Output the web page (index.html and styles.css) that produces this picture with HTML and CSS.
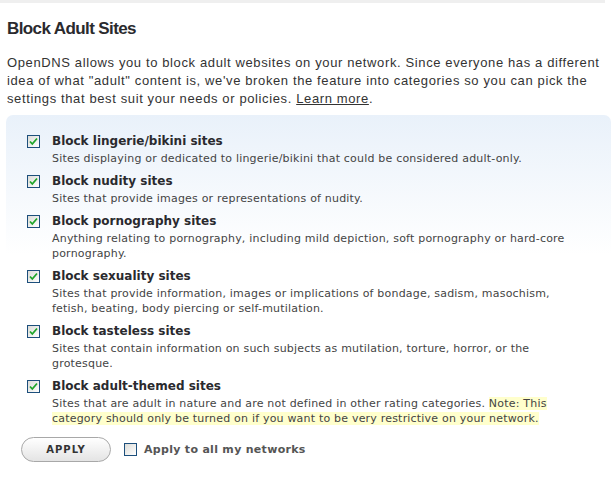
FILE: index.html
```html
<!DOCTYPE html>
<html>
<head>
<meta charset="utf-8">
<link rel="stylesheet" href="styles.css">
</head>
<body>
<div class="topbar"></div>
<div class="page">
  <h1 class="title">Block Adult Sites</h1>
  <p class="intro">OpenDNS allows you to block adult websites on your network. Since everyone has a different idea of what "adult" content is, we've broken the feature into categories so you can pick the settings that best suit your needs or policies. <a class="link" href="#">Learn more</a>.</p>
  <div class="panel">
    <div class="item">
      <span class="cb checked"><svg viewBox="0 0 13 13" width="13" height="13"><path d="M3 6.5 L5.3 9 L10 3.5" fill="none" stroke="#1fa52a" stroke-width="1.8"/></svg></span>
      <div class="body">
        <div class="name">Block lingerie/bikini sites</div>
        <div class="desc">Sites displaying or dedicated to lingerie/bikini that could be considered adult-only.</div>
      </div>
    </div>
    <div class="item">
      <span class="cb checked"><svg viewBox="0 0 13 13" width="13" height="13"><path d="M3 6.5 L5.3 9 L10 3.5" fill="none" stroke="#1fa52a" stroke-width="1.8"/></svg></span>
      <div class="body">
        <div class="name">Block nudity sites</div>
        <div class="desc">Sites that provide images or representations of nudity.</div>
      </div>
    </div>
    <div class="item">
      <span class="cb checked"><svg viewBox="0 0 13 13" width="13" height="13"><path d="M3 6.5 L5.3 9 L10 3.5" fill="none" stroke="#1fa52a" stroke-width="1.8"/></svg></span>
      <div class="body">
        <div class="name">Block pornography sites</div>
        <div class="desc">Anything relating to pornography, including mild depiction, soft pornography or hard&#8209;core pornography.</div>
      </div>
    </div>
    <div class="item">
      <span class="cb checked"><svg viewBox="0 0 13 13" width="13" height="13"><path d="M3 6.5 L5.3 9 L10 3.5" fill="none" stroke="#1fa52a" stroke-width="1.8"/></svg></span>
      <div class="body">
        <div class="name">Block sexuality sites</div>
        <div class="desc">Sites that provide information, images or implications of bondage, sadism, masochism, fetish, beating, body piercing or self-mutilation.</div>
      </div>
    </div>
    <div class="item">
      <span class="cb checked"><svg viewBox="0 0 13 13" width="13" height="13"><path d="M3 6.5 L5.3 9 L10 3.5" fill="none" stroke="#1fa52a" stroke-width="1.8"/></svg></span>
      <div class="body">
        <div class="name">Block tasteless sites</div>
        <div class="desc">Sites that contain information on such subjects as mutilation, torture, horror, or the grotesque.</div>
      </div>
    </div>
    <div class="item">
      <span class="cb checked"><svg viewBox="0 0 13 13" width="13" height="13"><path d="M3 6.5 L5.3 9 L10 3.5" fill="none" stroke="#1fa52a" stroke-width="1.8"/></svg></span>
      <div class="body">
        <div class="name">Block adult-themed sites</div>
        <div class="desc">Sites that are adult in nature and are not defined in other rating categories. <span class="note">Note: This category should only be turned on if you want to be very restrictive on your network.</span></div>
      </div>
    </div>
  </div>
  <div class="actions">
    <button class="apply" type="button">APPLY</button>
    <label class="all"><span class="cb"></span><span class="all-text">Apply to all my networks</span></label>
  </div>
</div>
</body>
</html>
```
FILE: styles.css
```css
html, body { margin: 0; padding: 0; background: #fff; }
body { width: 613px; height: 495px; overflow: hidden; }
.topbar { height: 3px; background: #efefef; margin-right: 8px; }
.page { padding: 0 2px 0 7px; }
.title {
  margin: 15px 0 0 0;
  font-family: "Liberation Sans", Arial, sans-serif;
  font-weight: bold;
  font-size: 17px;
  letter-spacing: -0.6px;
  line-height: 22px;
  color: #2a2a2e;
}
.intro {
  margin: 14px 0 0 0;
  font-family: "Liberation Sans", Arial, sans-serif;
  font-size: 13px;
  letter-spacing: 0.62px;
  line-height: 18px;
  color: #333;
}
.link { color: #333; text-decoration: underline; }
.panel {
  margin: 7px 0 0 -1px;
  border-radius: 7px 7px 0 0;
  background: linear-gradient(to bottom, #e9f1fa 0px, #ffffff 140px);
  padding: 18px 0 0 21px;
}
.item { display: flex; align-items: flex-start; margin-bottom: 7px; }
.cb {
  flex: none;
  width: 11px; height: 11px;
  border: 1px solid #1d4f7c;
  background: linear-gradient(135deg, #dcdcd8 0%, #ffffff 100%);
  position: relative;
  margin-top: 2px;
}
.cb svg { position: absolute; left: -1px; top: -1px; }
.body { margin-left: 12px; width: 522px; }
.name {
  font-family: "DejaVu Sans", Verdana, sans-serif;
  font-weight: bold;
  font-size: 12px;
  line-height: 16px;
  color: #2a2a2e;
}
.desc {
  margin-top: 2px;
  font-family: "DejaVu Sans", Verdana, sans-serif;
  font-size: 11px;
  letter-spacing: 0.2px;
  line-height: 15px;
  color: #444;
}
.note { background: #ffffcc; }
.actions { display: flex; align-items: center; margin: 11px 0 0 14px; }
.apply {
  width: 90px; height: 25px;
  border: 1px solid #a8a8a8;
  border-radius: 13px;
  background: linear-gradient(to bottom, #ffffff 0%, #e4e4e4 100%);
  font-family: "DejaVu Sans", Verdana, sans-serif;
  font-weight: bold;
  font-size: 10px;
  letter-spacing: 1px;
  color: #333;
  padding: 0;
}
.all { display: flex; align-items: center; margin-left: 13px; }
.all .cb { margin-top: 0; }
.all-text {
  margin-left: 7px;
  font-family: "DejaVu Sans", Verdana, sans-serif;
  font-weight: bold;
  font-size: 11px;
  letter-spacing: 0.3px;
  color: #555;
}
```
